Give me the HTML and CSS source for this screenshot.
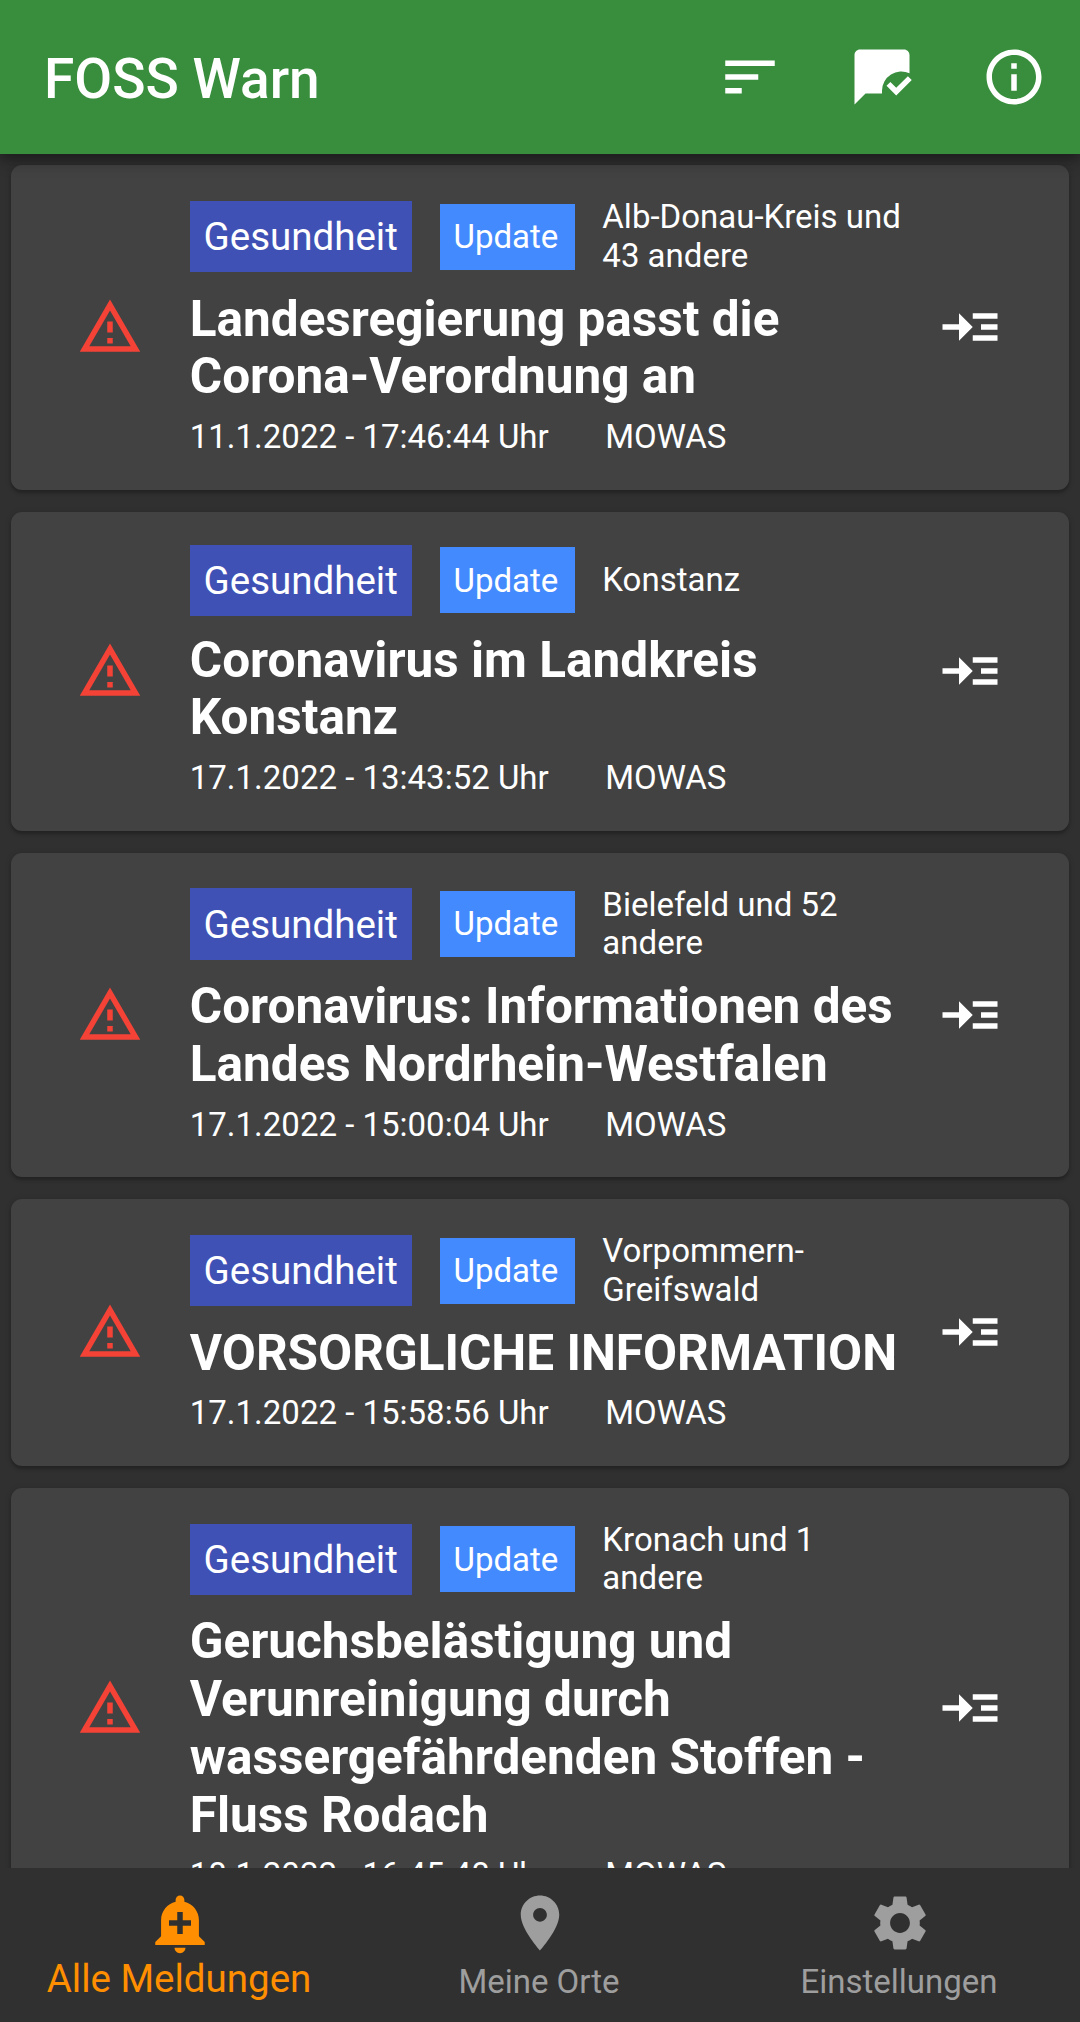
FILE: index.html
```html
<!DOCTYPE html>
<html lang="de">
<head>
<meta charset="utf-8">
<title>FOSS Warn</title>
<link rel="stylesheet" href="styles.css">
</head>
<body>
<svg class="sprite" aria-hidden="true">
  <symbol id="warning" viewBox="0 0 24 24"><path d="M12 5.99L19.53 19H4.47L12 5.99M12 2L1 21h22L12 2zm1 14h-2v2h2v-2zm0-6h-2v4h2v-4z"/></symbol>
  <symbol id="more" viewBox="0 0 24 24"><path d="M22 7h-9v2h9V7zm0 8h-9v2h9v-2zm0-4h-6v2h6v-2zm-9 1L8 7v4H2v2h6v4l5-5z"/></symbol>
</svg>
<header class="app-bar">
  <h1 class="app-title">FOSS Warn</h1>
  <div class="actions">
    <svg class="icon" viewBox="0 0 24 24"><path d="M3 18h6v-2H3v2zM3 6v2h18V6H3zm0 7h12v-2H3v2z"/></svg>
    <svg class="icon" viewBox="0 0 24 24"><path d="M12 18H6l-4 4V4c0-1.1.9-2 2-2h16c1.1 0 2 .9 2 2v6.68A7 7 0 0 0 12 17v1zm10.820-4.900-1.410-1.410-4.240 4.240-2.120-2.120-1.410 1.410 3.530 3.540 5.650-5.660z"/></svg>
    <svg class="icon" viewBox="0 0 24 24"><path d="M11 7h2v2h-2zm0 4h2v6h-2zm1-9C6.480 2 2 6.480 2 12s4.480 10 10 10 10-4.480 10-10S17.520 2 12 2zm0 18c-4.410 0-8-3.590-8-8s3.590-8 8-8 8 3.590 8 8-3.590 8-8 8z"/></svg>
  </div>
</header>
<main class="list">
  <article class="card">
    <svg class="icon warn"><use href="#warning"/></svg>
    <div class="content">
      <div class="tags"><span class="chip category">Gesundheit</span><span class="chip update">Update</span><span class="area">Alb-Donau-Kreis und<br>43 andere</span></div>
      <h2 class="headline">Landesregierung passt die<br>Corona-Verordnung an</h2>
      <div class="meta"><span>11.1.2022 - 17:46:44 Uhr</span><span>MOWAS</span></div>
    </div>
    <svg class="icon open"><use href="#more"/></svg>
  </article>
  <article class="card">
    <svg class="icon warn"><use href="#warning"/></svg>
    <div class="content">
      <div class="tags"><span class="chip category">Gesundheit</span><span class="chip update">Update</span><span class="area">Konstanz</span></div>
      <h2 class="headline">Coronavirus im Landkreis<br>Konstanz</h2>
      <div class="meta"><span>17.1.2022 - 13:43:52 Uhr</span><span>MOWAS</span></div>
    </div>
    <svg class="icon open"><use href="#more"/></svg>
  </article>
  <article class="card">
    <svg class="icon warn"><use href="#warning"/></svg>
    <div class="content">
      <div class="tags"><span class="chip category">Gesundheit</span><span class="chip update">Update</span><span class="area">Bielefeld und 52<br>andere</span></div>
      <h2 class="headline">Coronavirus: Informationen des<br>Landes Nordrhein-Westfalen</h2>
      <div class="meta"><span>17.1.2022 - 15:00:04 Uhr</span><span>MOWAS</span></div>
    </div>
    <svg class="icon open"><use href="#more"/></svg>
  </article>
  <article class="card">
    <svg class="icon warn"><use href="#warning"/></svg>
    <div class="content">
      <div class="tags"><span class="chip category">Gesundheit</span><span class="chip update">Update</span><span class="area">Vorpommern-<br>Greifswald</span></div>
      <h2 class="headline">VORSORGLICHE INFORMATION</h2>
      <div class="meta"><span>17.1.2022 - 15:58:56 Uhr</span><span>MOWAS</span></div>
    </div>
    <svg class="icon open"><use href="#more"/></svg>
  </article>
  <article class="card">
    <svg class="icon warn"><use href="#warning"/></svg>
    <div class="content">
      <div class="tags"><span class="chip category">Gesundheit</span><span class="chip update">Update</span><span class="area">Kronach und 1<br>andere</span></div>
      <h2 class="headline">Geruchsbelästigung und<br>Verunreinigung durch<br>wassergefährdenden Stoffen -<br>Fluss Rodach</h2>
      <div class="meta"><span>18.1.2022 - 16:45:48 Uhr</span><span>MOWAS</span></div>
    </div>
    <svg class="icon open"><use href="#more"/></svg>
  </article>
</main>
<nav class="bottom-nav">
  <a class="tab selected">
    <svg class="icon" viewBox="0 0 24 24"><path d="M10.010 21.010c0 1.100.890 1.990 1.990 1.990s1.990-.890 1.990-1.990h-3.980zm8.870-4.190V11c0-3.250-2.250-5.970-5.290-6.690v-.720C13.590 2.710 12.880 2 12 2s-1.590.710-1.590 1.590v.720C7.370 5.030 5.120 7.750 5.120 11v5.820L3 18.940V20h18v-1.060l-2.120-2.120zM16 13.010h-3v3h-2v-3H8V11h3V8h2v3h3v2.010z"/></svg>
    <span>Alle Meldungen</span>
  </a>
  <a class="tab">
    <svg class="icon" viewBox="0 0 24 24"><path d="M12 2C8.130 2 5 5.130 5 9c0 5.250 7 13 7 13s7-7.750 7-13c0-3.870-3.130-7-7-7zm0 9.500c-1.380 0-2.500-1.120-2.500-2.500s1.120-2.500 2.500-2.500 2.500 1.120 2.500 2.500-1.120 2.500-2.500 2.500z"/></svg>
    <span>Meine Orte</span>
  </a>
  <a class="tab">
    <svg class="icon" viewBox="0 0 24 24"><path d="M19.140 12.940c.040-.300.060-.610.060-.940 0-.320-.020-.640-.070-.940l2.030-1.580c.180-.140.230-.410.120-.610l-1.920-3.320c-.120-.220-.370-.290-.590-.220l-2.390.960c-.500-.380-1.030-.700-1.620-.940l-.360-2.540c-.040-.240-.240-.410-.480-.410h-3.840c-.240 0-.430.170-.470.410l-.360 2.540c-.590.240-1.130.570-1.620.940l-2.390-.960c-.220-.080-.470 0-.590.220L2.740 8.870c-.120.210-.080.470.120.610l2.030 1.580c-.050.300-.090.630-.090.940s.020.640.070.940l-2.030 1.580c-.180.140-.230.410-.120.610l1.920 3.320c.120.220.370.290.590.220l2.390-.960c.500.380 1.030.700 1.620.940l.360 2.540c.050.240.240.410.480.410h3.840c.240 0 .440-.170.470-.410l.360-2.540c.590-.240 1.130-.560 1.620-.940l2.390.960c.220.080.470 0 .590-.220l1.920-3.320c.120-.220.070-.470-.120-.610l-2.010-1.580zM12 15.600c-1.980 0-3.600-1.620-3.600-3.600s1.620-3.600 3.600-3.600 3.600 1.620 3.600 3.600-1.620 3.600-3.600 3.600z"/></svg>
    <span>Einstellungen</span>
  </a>
</nav>
</body>
</html>
```
FILE: styles.css
```css
* {
  box-sizing: border-box;
}

body {
  display: flex;
  flex-direction: column;
  height: 2022px;
  margin: 0;
  overflow: hidden;
  background: #303030;
  color: #fff;
  font-family: Roboto, "Liberation Sans", sans-serif;
  font-size: 33px;
  line-height: 38.5px;
}

h1,
h2 {
  margin: 0;
}

.sprite {
  display: none;
}

.icon {
  display: block;
  flex: none;
  width: 66px;
  height: 66px;
  fill: currentColor;
}

.app-bar {
  z-index: 1;
  display: flex;
  flex: none;
  align-items: center;
  justify-content: space-between;
  height: 154px;
  padding: 0 33px 0 44px;
  background: #388e3c;
  box-shadow: 0 5px 11px rgba(0, 0, 0, 0.3), 0 11px 14px rgba(0, 0, 0, 0.1);
}

.app-title {
  padding-top: 4px;
  font-size: 55px;
  font-weight: 500;
  line-height: 64px;
}

.actions {
  display: flex;
  gap: 66px;
}

.list {
  display: flex;
  flex: 1;
  flex-direction: column;
  gap: 22px;
  min-height: 0;
  padding: 11px;
  overflow: hidden;
}

.card {
  display: flex;
  flex: none;
  align-items: center;
  padding: 33px;
  border-radius: 11px;
  background: #424242;
  box-shadow: 0 3px 3px rgba(0, 0, 0, 0.2), 0 1px 6px rgba(0, 0, 0, 0.15);
}

.warn {
  margin: 0 33px;
  color: #f44336;
}

.open {
  margin: 0 33px;
}

.content {
  display: flex;
  flex: 1;
  flex-direction: column;
  gap: 13.75px;
  min-width: 0;
  padding-left: 13.75px;
  white-space: nowrap;
}

.tags {
  display: flex;
  align-items: center;
  gap: 27.5px;
}

.chip {
  padding: 14.25px 14.5px 13.25px 13.75px;
}

.category {
  background: #3f51b5;
  font-size: 38.5px;
  line-height: 44px;
}

.update {
  padding-right: 16.5px;
  background: #448aff;
}

.headline {
  margin-bottom: -1.75px;
  padding-top: 1.75px;
  font-size: 49.5px;
  font-weight: 700;
  line-height: 57.75px;
}

.meta {
  display: flex;
  gap: 56.5px;
}

.bottom-nav {
  display: flex;
  flex: none;
  height: 154px;
  background: #303030;
}

.tab {
  display: flex;
  flex: 1;
  flex-direction: column;
  align-items: center;
  gap: 7px;
  padding-top: 22px;
  color: #9e9e9e;
}

.tab span {
  padding-right: 2px;
}

.selected {
  gap: 0;
  color: #ff8f00;
  font-size: 38.5px;
  line-height: 45px;
}
```
